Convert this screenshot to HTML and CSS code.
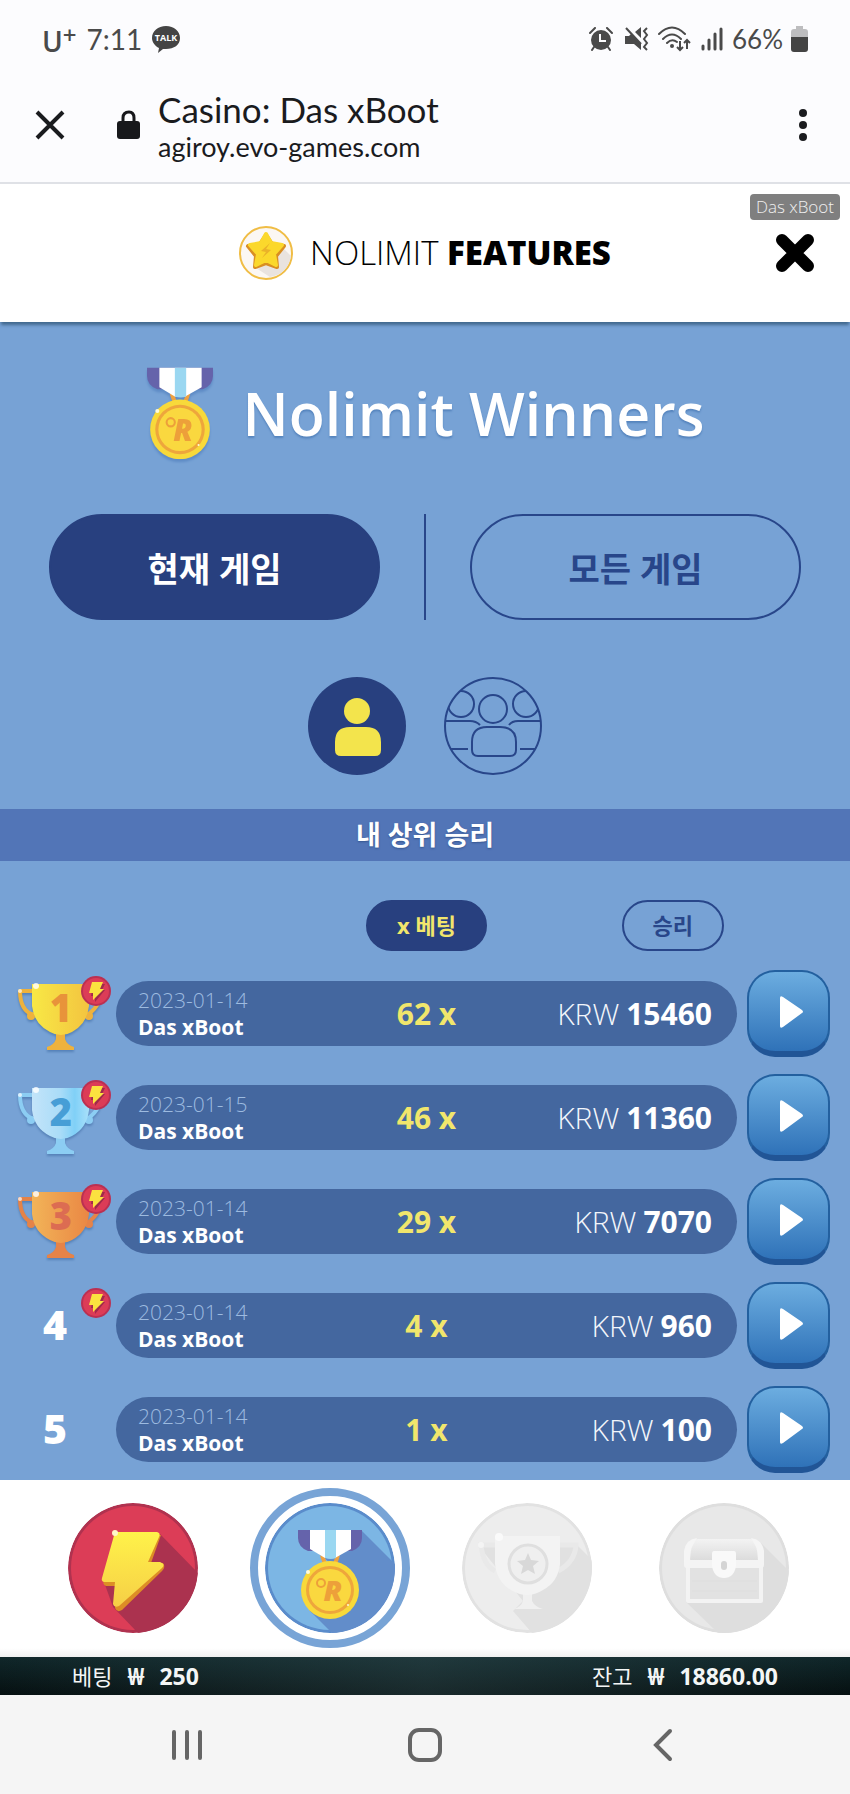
FILE: index.html
```html
<!DOCTYPE html>
<html lang="ko">
<head>
    <meta charset="UTF-8">
    <meta name="viewport" content="width=device-width, initial-scale=1.0">
    <title>Casino: Das xBoot</title>
    <link rel="stylesheet" href="styles.css">
</head>
<body>

    <!-- shared shapes -->
    <svg class="sprite" width="0" height="0" aria-hidden="true">
        <defs>
            <linearGradient id="gold" x1="0" y1="0" x2="0" y2="1">
                <stop offset="0" stop-color="#fff24a"/>
                <stop offset="1" stop-color="#f6cf46"/>
            </linearGradient>
            <linearGradient id="cup-gold" x1="0" y1="0" x2="1" y2="0">
                <stop offset="0" stop-color="#f8e845"/>
                <stop offset="1" stop-color="#f3c440"/>
            </linearGradient>
            <linearGradient id="cup-silver" x1="0" y1="0" x2="1" y2="0">
                <stop offset="0" stop-color="#c3e4f9"/>
                <stop offset="0.5" stop-color="#a9dcf8"/>
                <stop offset="0.75" stop-color="#80d0f7"/>
                <stop offset="1" stop-color="#a9e0fa"/>
            </linearGradient>
            <linearGradient id="cup-bronze" x1="0" y1="0" x2="1" y2="0">
                <stop offset="0" stop-color="#f2b458"/>
                <stop offset="1" stop-color="#ea8744"/>
            </linearGradient>
            <linearGradient id="lid" x1="0" y1="0" x2="0" y2="1">
                <stop offset="0" stop-color="#f3f3f3"/>
                <stop offset="1" stop-color="#dcdcdc"/>
            </linearGradient>
            <clipPath id="disc"><circle cx="65" cy="65" r="65"/></clipPath>
            <clipPath id="crowd"><circle cx="49" cy="49" r="48"/></clipPath>
        </defs>
        <symbol id="medal" viewBox="32 26 66 90">
            <path d="M57 52l3 9M73 52l-3 9" stroke="#efa13f" stroke-width="4"/>
            <path d="M33 27h64v8q0 9-10 13H43q-10-4-10-13z" fill="#6563ab"/>
            <path d="M45 27h41v19l-16 9h-10l-15-9z" fill="#fff"/>
            <path d="M60 27h11v28q-5 2-11 0z" fill="#9ad7f1"/>
            <circle cx="65" cy="87" r="29" fill="#f8d93a"/>
            <circle cx="65" cy="87" r="24" fill="#eea63c"/>
            <circle cx="65" cy="87" r="21" fill="#fad83f"/>
            <circle cx="43" cy="69" r="2" fill="#fffbd8"/>
            <circle cx="83" cy="102" r="1" fill="#fffbd8"/>
        </symbol>
        <symbol id="bolt" viewBox="30 24 70 86">
            <path d="M49 32h44l-10 28h12q3 4-1 8L54 107q-5 3-7-2l1-22H38q-4-2-2-5z" fill="#dd8d26"/>
            <path d="M47 29h42q4 1 2 5L80 59h12q6 2 2 6L51 103q-5 2-6-2l2-22H36q-3-1-2-4z" fill="url(#gold)"/>
        </symbol>
        <symbol id="bolt-badge" viewBox="0 0 30 30">
            <circle cx="15" cy="15" r="15" fill="#bb3052"/>
            <circle cx="15" cy="15" r="13" fill="#dc3c57"/>
            <path d="M12 8h12l-3 6h3l-10 12v-6h-4z" fill="#9f2b4a"/>
            <path d="M11 6h11l-3 7h4l-11 11v-7H8z" fill="#fbe23f"/>
        </symbol>
        <symbol id="cup" viewBox="0 1 86 84">
            <path d="M18 20H5q0 19 13 24M73 20h13q0 15-15 25" fill="none" stroke="currentColor" stroke-width="4" stroke-linejoin="round"/>
            <circle cx="16" cy="45" r="4" fill="currentColor"/>
            <circle cx="74" cy="45" r="4" fill="currentColor"/>
            <path d="M41 62h9v6q2 6 9 8v3H32v-3q7-2 9-8z" fill="currentColor"/>
            <path d="M17 13h57v22q-2 18-17 26-5 3-11 3t-11-3Q19 53 17 35z"/>
            <circle cx="21" cy="15" r="3" fill="#fff" opacity=".8"/>
            <circle cx="5" cy="20" r="2" fill="#fff" opacity=".7"/>
        </symbol>
        <symbol id="play" viewBox="0 0 26 34">
            <path d="M2 3v28q0 3 3 1l19-14q2-1 0-3L5 2Q2 0 2 3z" fill="#fff"/>
        </symbol>
    </svg>

    <header class="status-bar">
        <div class="status-left">
            <span class="carrier">U<sup>+</sup></span>
            <span class="clock">7:11</span>
            <svg class="talk" width="28" height="27" viewBox="0 0 28 27">
                <path d="M14 0c8 0 14 5 14 12s-6 11-14 11l-3 0-5 4 1-5C3 20 0 16 0 12 0 5 6 0 14 0z" fill="#444"/>
                <text x="14" y="15" class="talk-text">TALK</text>
            </svg>
        </div>
        <div class="status-right">
            <svg width="24" height="24" viewBox="0 0 24 24" aria-hidden="true">
                <circle cx="12" cy="13" r="10" fill="#4a4a4a"/>
                <path d="M1 6l5-5M23 6l-5-5M5 20l-2 3M19 20l2 3" stroke="#4a4a4a" stroke-width="2" stroke-linecap="round"/>
                <path d="M11 7v7h6" fill="none" stroke="#fcfcfe" stroke-width="2"/>
            </svg>
            <svg class="mute" width="26" height="24" viewBox="0 0 26 24" aria-hidden="true">
                <path d="M1 9h4l2-2 10 10v6l-7-6H1zM11 5l6-5v11z" fill="#4a4a4a"/>
                <path d="M2 1l15 16" stroke="#4a4a4a" stroke-width="2"/>
                <path d="M23 1l-3 3 3 4-3 4 3 4-3 4 3 3" fill="none" stroke="#4a4a4a" stroke-width="2"/>
            </svg>
            <svg width="34" height="26" viewBox="0 0 34 26" aria-hidden="true">
                <path d="M1 8q13-13 26 0M5 13q9-9 18 0M9 17q5-5 10-1" fill="none" stroke="#4a4a4a" stroke-width="2" stroke-linecap="round"/>
                <circle cx="14" cy="20" r="2" fill="#4a4a4a"/>
                <path d="M22 15v9M19 21l3 3 3-3M29 23v-9M26 17l3-3 3 3" fill="none" stroke="#4a4a4a" stroke-width="2"/>
            </svg>
            <svg width="24" height="24" viewBox="0 0 24 24" aria-hidden="true">
                <path d="M3 19v3M9 13v9M15 7v15M21 2v20" stroke="#4a4a4a" stroke-width="3" stroke-linecap="round"/>
            </svg>
            <span class="battery-text">66%</span>
            <svg width="17" height="26" viewBox="0 0 17 26" aria-hidden="true">
                <path d="M5 0h7v3h2q3 0 3 3v6H0V6q0-3 3-3h2z" fill="#bdbdbf"/>
                <path d="M0 11h17v12q0 3-3 3H3q-3 0-3-3z" fill="#444"/>
            </svg>
        </div>
    </header>

    <div class="browser-bar">
        <button class="icon-button" aria-label="닫기">
            <svg width="30" height="30" viewBox="0 0 30 30">
                <path d="M2 2l26 26M28 2L2 28" stroke="#1a1b1e" stroke-width="4"/>
            </svg>
        </button>
        <svg class="lock" width="23" height="30" viewBox="0 0 23 30" aria-hidden="true">
            <path d="M6 12V8q0-6 6-6 5 0 5 6v4" fill="none" stroke="#17181b" stroke-width="3"/>
            <rect y="11" width="23" height="18" rx="3" fill="#17181b"/>
        </svg>
        <div class="address">
            <div class="page-title">Casino: Das xBoot</div>
            <div class="page-url">agiroy.evo-games.com</div>
        </div>
        <button class="icon-button" aria-label="메뉴">
            <svg width="10" height="34" viewBox="0 0 10 34">
                <g fill="#1a1b1e"><circle cx="5" cy="5" r="4"/><circle cx="5" cy="17" r="4"/><circle cx="5" cy="29" r="4"/></g>
            </svg>
        </button>
    </div>

    <div class="features-bar">
        <svg width="54" height="54" viewBox="0 0 54 54" aria-hidden="true">
            <circle cx="27" cy="27" r="26" fill="#fbf7f3" stroke="#f0bd45" stroke-width="2"/>
            <path d="M45 23l7 7q-3 18-21 21L17 42z" fill="#e9e3df"/>
            <path d="M27 9l6 9 12 2-8 10 1 11-11-4-11 4 1-11-8-10 12-2z" fill="#d98e22" stroke="#d98e22" stroke-width="4" stroke-linejoin="round"/>
            <path d="M27 8l5 9 11 2-8 9 2 11-10-5-10 5 2-11-8-9 11-2z" fill="#fbd82c" stroke="#fbd82c" stroke-width="4" stroke-linejoin="round"/>
            <path d="M31 17l-9 8 5 1-4 6 9-8-5-1z" fill="#eab229"/>
        </svg>
        <h1 class="features-title">NOLIMIT <b>FEATURES</b></h1>
        <span class="game-badge">Das xBoot</span>
        <button class="icon-button features-close" aria-label="닫기">
            <svg width="40" height="40" viewBox="0 0 40 40">
                <path d="M7 7l26 26M33 7L7 33" stroke="#000" stroke-width="12" stroke-linecap="round"/>
            </svg>
        </button>
    </div>

    <main class="winners">
        <div class="winners-head">
            <svg class="winners-medal" width="68" height="94" viewBox="32 26 66 90">
                <use href="#medal" x="32" y="26" width="66" height="90"/>
                <text x="68" y="98" class="medal-letter">R</text>
                <circle cx="56" cy="80" r="4" fill="#fad83f" stroke="#eda03a" stroke-width="2"/>
            </svg>
            <h2>Nolimit Winners</h2>
        </div>

        <div class="scope">
            <button class="scope-button active">현재 게임</button>
            <span class="scope-divider"></span>
            <button class="scope-button">모든 게임</button>
        </div>

        <div class="audience">
            <button class="icon-button" aria-label="내 승리">
                <svg width="98" height="98" viewBox="0 0 98 98">
                    <circle cx="49" cy="49" r="49" fill="#28407f"/>
                    <circle cx="49" cy="34" r="13" fill="#f3e44c"/>
                    <path d="M27 65q0-15 15-15h16q15 0 15 15v8q0 6-6 6H33q-6 0-6-6z" fill="#f3e44c"/>
                </svg>
            </button>
            <button class="icon-button" aria-label="모든 플레이어">
                <svg width="98" height="98" viewBox="0 0 98 98">
                    <g fill="none" stroke="#28468a" stroke-width="2">
                        <circle cx="49" cy="49" r="48"/>
                        <circle cx="49" cy="32" r="14"/>
                        <path d="M28 65q0-15 15-15h13q16 0 16 15v8q0 6-6 6H34q-6 0-6-6z"/>
                        <g clip-path="url(#crowd)">
                            <circle cx="17" cy="27" r="13"/>
                            <circle cx="82" cy="27" r="13"/>
                            <path d="M0 44h26q6 0 10 4M98 44H74q-6 0-9 4M0 72h24M98 72H76"/>
                        </g>
                    </g>
                </svg>
            </button>
        </div>

        <h3 class="band">내 상위 승리</h3>

        <table class="wins">
            <thead>
                <tr>
                    <th></th>
                    <th></th>
                    <th class="multi"><button class="sort-button active">x 베팅</button></th>
                    <th class="amount"><button class="sort-button">승리</button></th>
                    <th></th>
                </tr>
            </thead>
            <tbody>
                <tr>
                    <td class="rank gold">
                        <svg class="trophy" width="86" height="84"><use href="#cup"/></svg>
                        <span class="cup-number">1</span>
                        <svg class="badge" width="30" height="30"><use href="#bolt-badge"/></svg>
                    </td>
                    <td class="game"><span class="date">2023-01-14</span><span class="name">Das xBoot</span></td>
                    <td class="multi">62 x</td>
                    <td class="amount">KRW <b>15460</b></td>
                    <td class="action"><button class="play-button" aria-label="재생"><svg width="26" height="34"><use href="#play"/></svg></button></td>
                </tr>
                <tr>
                    <td class="rank silver">
                        <svg class="trophy" width="86" height="84"><use href="#cup"/></svg>
                        <span class="cup-number">2</span>
                        <svg class="badge" width="30" height="30"><use href="#bolt-badge"/></svg>
                    </td>
                    <td class="game"><span class="date">2023-01-15</span><span class="name">Das xBoot</span></td>
                    <td class="multi">46 x</td>
                    <td class="amount">KRW <b>11360</b></td>
                    <td class="action"><button class="play-button" aria-label="재생"><svg width="26" height="34"><use href="#play"/></svg></button></td>
                </tr>
                <tr>
                    <td class="rank bronze">
                        <svg class="trophy" width="86" height="84"><use href="#cup"/></svg>
                        <span class="cup-number">3</span>
                        <svg class="badge" width="30" height="30"><use href="#bolt-badge"/></svg>
                    </td>
                    <td class="game"><span class="date">2023-01-14</span><span class="name">Das xBoot</span></td>
                    <td class="multi">29 x</td>
                    <td class="amount">KRW <b>7070</b></td>
                    <td class="action"><button class="play-button" aria-label="재생"><svg width="26" height="34"><use href="#play"/></svg></button></td>
                </tr>
                <tr>
                    <td class="rank">
                        <span class="rank-number">4</span>
                        <svg class="badge" width="30" height="30"><use href="#bolt-badge"/></svg>
                    </td>
                    <td class="game"><span class="date">2023-01-14</span><span class="name">Das xBoot</span></td>
                    <td class="multi">4 x</td>
                    <td class="amount">KRW <b>960</b></td>
                    <td class="action"><button class="play-button" aria-label="재생"><svg width="26" height="34"><use href="#play"/></svg></button></td>
                </tr>
                <tr>
                    <td class="rank"><span class="rank-number">5</span></td>
                    <td class="game"><span class="date">2023-01-14</span><span class="name">Das xBoot</span></td>
                    <td class="multi">1 x</td>
                    <td class="amount">KRW <b>100</b></td>
                    <td class="action"><button class="play-button" aria-label="재생"><svg width="26" height="34"><use href="#play"/></svg></button></td>
                </tr>
            </tbody>
        </table>
    </main>

    <nav class="feature-nav">
        <button class="feature-button" aria-label="부스트">
            <svg width="130" height="130" viewBox="0 0 130 130">
                <g clip-path="url(#disc)">
                    <circle cx="65" cy="65" r="65" fill="#b0324f"/>
                    <circle cx="65" cy="65" r="62" fill="#dc3d57"/>
                    <path d="M92 31l38 39v60H70L45 104l-9-25z" fill="#ab324f"/>
                </g>
                <use href="#bolt" x="30" y="24" width="70" height="86"/>
                <circle cx="47" cy="30" r="3" fill="#fff6c8"/>
            </svg>
        </button>
        <button class="feature-button selected" aria-label="승자">
            <svg width="130" height="130" viewBox="0 0 130 130">
                <g clip-path="url(#disc)">
                    <circle cx="65" cy="65" r="65" fill="#5a8ccb"/>
                    <circle cx="65" cy="65" r="62" fill="#7cb6e4"/>
                    <path d="M96 27l34 34v69H67L44 107l20-48-17-13z" fill="#628dca"/>
                </g>
                <use href="#medal" x="32" y="26" width="66" height="90"/>
                <text x="68" y="98" class="medal-letter">R</text>
                <circle cx="56" cy="80" r="4" fill="#fad83f" stroke="#eda03a" stroke-width="2"/>
            </svg>
        </button>
        <button class="feature-button" aria-label="토너먼트">
            <svg width="130" height="130" viewBox="0 0 130 130">
                <g clip-path="url(#disc)">
                    <circle cx="65" cy="65" r="65" fill="#e2e2e2"/>
                    <circle cx="65" cy="65" r="62" fill="#ededed"/>
                    <path d="M115 42l15 15v73H70L51 108l10-10-45-56h16z" fill="#e1e1e1"/>
                </g>
                <path d="M33 42H19q2 20 14 26M98 42h16q-1 17-18 26" fill="none" stroke="#e9e9e9" stroke-width="5"/>
                <path d="M61 88h9v10q3 6 11 8H52q7-2 9-8z" fill="#f0f0f0"/>
                <path d="M33 33h65v28q-2 18-17 26-8 5-16 5t-16-5Q35 79 33 61z" fill="#f3f3f3"/>
                <circle cx="66" cy="61" r="19" fill="#efefef" stroke="#dfdfdf" stroke-width="3"/>
                <path d="M66 50l3 7 8 1-6 5 2 8-7-4-7 4 2-8-6-5 8-1z" fill="#d8d8d8"/>
                <circle cx="37" cy="34" r="4" fill="#fafafa"/>
                <circle cx="19" cy="42" r="3" fill="#f4f4f4"/>
            </svg>
        </button>
        <button class="feature-button" aria-label="보상">
            <svg width="130" height="130" viewBox="0 0 130 130">
                <g clip-path="url(#disc)">
                    <circle cx="65" cy="65" r="65" fill="#dedede"/>
                    <circle cx="65" cy="65" r="62" fill="#e8e8e8"/>
                    <path d="M100 38l30 30v62H59L27 99z" fill="#dedede"/>
                </g>
                <path d="M27 57V47q2-11 12-11h52q11 0 13 11v10z" fill="url(#lid)"/>
                <path d="M25 62V48q2-12 13-13l-4 7q-3 4-3 20zM105 62V48q-2-12-13-13l4 7q3 4 3 20z" fill="#f5f5f5"/>
                <path d="M29 62h73v36H29z" fill="#e2e2e2" stroke="#f3f3f3" stroke-width="4" stroke-linejoin="round"/>
                <path d="M33 78h65M33 88h65" stroke="#dedede" stroke-width="1"/>
                <rect x="25" y="57" width="80" height="8" rx="3" fill="#f4f4f4"/>
                <path d="M55 48h20q2 0 2 3v12q-2 12-12 12T53 63V51q0-3 2-3z" fill="#f9f9f9"/>
                <rect x="62" y="58" width="6" height="9" rx="3" fill="#d4d4d4"/>
            </svg>
        </button>
    </nav>

    <div class="balance-bar">
        <div class="balance-item"><span class="label">베팅</span><b class="won">₩</b><b>250</b></div>
        <div class="balance-item"><span class="label">잔고</span><b class="won">₩</b><b>18860.00</b></div>
    </div>

    <footer class="system-nav">
        <button class="icon-button" aria-label="최근">
            <svg width="34" height="34" viewBox="0 0 34 34">
                <path d="M4 4v26M17 4v26M30 4v26" stroke="#666" stroke-width="4" stroke-linecap="round"/>
            </svg>
        </button>
        <button class="icon-button" aria-label="홈">
            <svg width="34" height="34" viewBox="0 0 34 34">
                <rect x="2" y="2" width="30" height="30" rx="9" fill="none" stroke="#666" stroke-width="4"/>
            </svg>
        </button>
        <button class="icon-button" aria-label="뒤로">
            <svg width="34" height="34" viewBox="0 0 34 34">
                <path d="M24 3L10 17l14 14" fill="none" stroke="#666" stroke-width="4" stroke-linecap="round"/>
            </svg>
        </button>
    </footer>

</body>
</html>
```
FILE: styles.css
```css
* {
    box-sizing: border-box;
}

body {
    margin: 0;
    min-height: 100vh;
    display: flex;
    flex-direction: column;
    font-family: "Open Sans", "Noto Sans CJK KR", sans-serif;
    background: #fcfcfe;
}

h1, h2, h3 {
    margin: 0;
}

button {
    font-family: inherit;
    border: none;
    padding: 0;
    background: none;
    cursor: pointer;
}

svg {
    display: block;
    flex: none;
}

.sprite {
    position: absolute;
}

.icon-button {
    display: block;
}

/* phone status bar */
.status-bar {
    display: flex;
    justify-content: space-between;
    align-items: center;
    height: 78px;
    padding: 0 42px;
    color: #4a4a4a;
    font-family: Lato, sans-serif;
    font-size: 28px;
}

.status-left, .status-right {
    display: flex;
    align-items: center;
}

.status-left {
    gap: 10px;
}

.status-right {
    gap: 8px;
}

.mute {
    margin-left: 3px;
}

.carrier {
    font-family: "Open Sans", sans-serif;
    font-weight: 600;
    line-height: 30px;
}

.carrier sup {
    font-size: 24px;
    line-height: 1;
    vertical-align: 8px;
}

.talk-text {
    font-family: "Open Sans", sans-serif;
    font-size: 9px;
    font-weight: 700;
    text-anchor: middle;
    fill: #fff;
}

.battery-text {
    font-size: 26px;
}

/* browser bar */
.browser-bar {
    display: flex;
    align-items: center;
    height: 106px;
    padding: 0 42px 11px 35px;
    border-bottom: 2px solid #dfe1e6;
    font-family: Lato, sans-serif;
    color: #1a1b1e;
}

.lock {
    margin: 0 18px 0 52px;
}

.address {
    flex: 1;
    padding-top: 4px;
}

.page-title {
    font-size: 35px;
    line-height: 40px;
}

.page-url {
    font-size: 27px;
    line-height: 36px;
}

/* features header */
.features-bar {
    position: relative;
    z-index: 1;
    display: flex;
    justify-content: center;
    align-items: center;
    gap: 17px;
    height: 138px;
    background: #fff;
    box-shadow: 0 4px 3px -1px #42698f;
}

.features-title {
    font-size: 33px;
    font-weight: 300;
    line-height: 44px;
    color: #000;
}

.features-title b {
    font-weight: 800;
}

.game-badge {
    position: absolute;
    top: 10px;
    right: 10px;
    padding: 0 6px;
    border-radius: 4px;
    background: #7f7f7f;
    color: #f0f0f0;
    font-size: 17px;
    font-weight: 300;
    line-height: 26px;
}

.features-close {
    position: absolute;
    top: 49px;
    right: 35px;
}

/* winners */
.winners {
    flex: 1;
    background: #77a2d5;
}

.winners-head {
    display: flex;
    justify-content: center;
    align-items: center;
    gap: 29px;
    padding: 44px 0 54px;
    color: #fff;
}

.winners-medal {
    filter: drop-shadow(0 3px 1px #5f8cc6);
}

.medal-letter {
    font-family: "Open Sans", sans-serif;
    font-size: 29px;
    font-style: italic;
    font-weight: 800;
    text-anchor: middle;
    fill: #eda03a;
}

.winners-head h2 {
    font-size: 59px;
    font-weight: 600;
    line-height: 94px;
    text-shadow: 0 2px 2px #5584bd;
}

.scope {
    display: flex;
    justify-content: space-between;
    gap: 44px;
    padding: 0 49px;
}

.scope-button {
    flex: 1;
    height: 106px;
    border: 2px solid #28468a;
    border-radius: 53px;
    color: #28468a;
    font-size: 34px;
    font-weight: 700;
}

.scope-button.active {
    background: #28407f;
    border-color: #28407f;
    color: #fff;
}

.scope-divider {
    width: 2px;
    background: #28468a;
}

.audience {
    display: flex;
    justify-content: center;
    gap: 38px;
    padding: 57px 0 34px;
}

.band {
    background: #5275b7;
    color: #fff;
    font-size: 27px;
    font-weight: 700;
    line-height: 52px;
    text-align: center;
    text-shadow: 0 1px 2px #35558f;
}

/* win list */
.wins {
    display: block;
}

.wins thead, .wins tbody {
    display: grid;
    gap: 17px;
}

.wins tbody {
    padding-bottom: 6px;
}

.wins tr {
    display: grid;
    grid-template-columns: 116px 1fr 1fr 1fr 113px;
    align-items: center;
}

.wins th {
    padding: 39px 0 19px;
}

.wins td {
    padding: 0;
}

.wins th.amount {
    padding-right: 13px;
    text-align: right;
}

.sort-button {
    height: 51px;
    padding: 0 29px 4px;
    border: 2px solid #28468a;
    border-radius: 26px;
    color: #28468a;
    font-size: 22px;
    font-weight: 700;
}

.sort-button.active {
    background: #28407f;
    border-color: #28407f;
    color: #f1e66c;
}

.wins td.game, .wins td.multi, .wins td.amount {
    display: flex;
    align-items: center;
    height: 65px;
    background: #44679f;
    font-size: 30px;
    line-height: 36px;
}

.wins td.game {
    flex-direction: column;
    align-items: flex-start;
    justify-content: center;
    padding-left: 22px;
    border-radius: 33px 0 0 33px;
}

.date {
    color: #9dbbe0;
    font-size: 21px;
    font-weight: 300;
    line-height: 27px;
}

.name {
    color: #fff;
    font-size: 21px;
    font-weight: 700;
    line-height: 27px;
}

.wins td.multi {
    justify-content: center;
    color: #f1e66c;
    font-weight: 700;
}

.wins td.amount {
    justify-content: flex-end;
    gap: 7px;
    padding-right: 25px;
    border-radius: 0 33px 33px 0;
    color: #f3f6fb;
    font-weight: 300;
}

.amount b {
    color: #fff;
    font-weight: 700;
}

.rank {
    position: relative;
}

.trophy {
    margin-left: 15px;
    filter: drop-shadow(0 2px 1px #5682b8);
}

.gold {
    color: #eeb23d;
}

.gold .trophy {
    fill: url(#cup-gold);
}

.silver {
    color: #8ccdf3;
}

.silver .trophy {
    fill: url(#cup-silver);
}

.bronze {
    color: #e58348;
}

.bronze .trophy {
    fill: url(#cup-bronze);
}

.cup-number {
    position: absolute;
    top: 9px;
    left: 15px;
    width: 92px;
    color: #e8933a;
    font-size: 38px;
    font-weight: 800;
    line-height: 52px;
    text-align: center;
}

.silver .cup-number {
    color: #479ed6;
}

.bronze .cup-number {
    color: #dc6c52;
}

.badge {
    position: absolute;
    top: 4px;
    left: 81px;
}

.rank-number {
    display: block;
    width: 110px;
    padding-bottom: 4px;
    color: #fff;
    font-size: 41px;
    font-weight: 800;
    line-height: 80px;
    text-align: center;
}

.play-button {
    display: flex;
    justify-content: center;
    align-items: center;
    width: 83px;
    height: 87px;
    margin-left: 10px;
    padding-left: 5px;
    border: 2px solid #23609f;
    border-bottom: 6px solid #215596;
    border-radius: 28px;
    background: linear-gradient(#6cade0, #2f72b8);
}

/* bottom feature buttons */
.feature-nav {
    display: flex;
    justify-content: center;
    gap: 37px;
    padding: 8px 0 9px 6px;
    background: linear-gradient(#fff 95%, #f0f0f0);
}

.feature-button {
    padding: 15px;
    border-radius: 50%;
}

.feature-button.selected {
    padding: 7px;
    border: 8px solid #78a4d6;
}

.balance-bar {
    display: flex;
    justify-content: space-between;
    padding: 0 72px;
    background: linear-gradient(90deg, transparent, rgba(70, 100, 105, 0.3), transparent), linear-gradient(#10272a, #061011);
    color: #f4f6f6;
    font-size: 23px;
    line-height: 38px;
}

.balance-item {
    display: flex;
    gap: 15px;
}

.balance-item .label {
    font-size: 22px;
}

.won {
    font-family: "Noto Sans", "Noto Sans CJK KR", sans-serif;
}

/* android buttons */
.system-nav {
    display: flex;
    justify-content: center;
    align-items: center;
    gap: 204px;
    height: 99px;
    background: #f5f5f5;
}
```
